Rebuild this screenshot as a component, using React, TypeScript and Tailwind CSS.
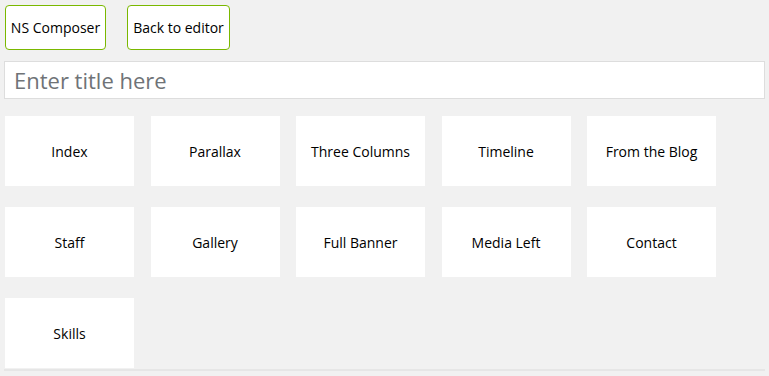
const layouts = [
  "Index",
  "Parallax",
  "Three Columns",
  "Timeline",
  "From the Blog",
  "Staff",
  "Gallery",
  "Full Banner",
  "Media Left",
  "Contact",
  "Skills",
]

export default function App() {
  return (
    <div className="min-h-[376px] w-full bg-[#f1f1f1] font-['Open_Sans',sans-serif] text-[#222]">
      <div className="px-[4px] pt-[5px]">
        {/* top buttons */}
        <div className="flex gap-[21px] pl-[1px]">
          <button className="h-[45px] w-[101px] rounded-[4px] border border-[#7ab800] bg-white text-[14px] text-black">
            NS Composer
          </button>
          <button className="h-[45px] w-[103px] rounded-[4px] border border-[#7ab800] bg-white text-[14px] text-black">
            Back to editor
          </button>
        </div>

        <input
          className="mt-[11px] block h-[38px] w-[761px] border border-[#dddddd] bg-white px-[9px] text-[22px] text-[#333] outline-none placeholder:text-[#6f7377]"
          placeholder="Enter title here"
        />

        {/* layout tiles */}
        <div className="mt-[17px] border-b-2 border-[#e6e6e6] pb-[1px]">
          <div className="grid grid-cols-[repeat(5,129px)] gap-x-[16.5px] gap-y-[21px] pl-[1px]">
            {layouts.map((name) => (
              <div
                key={name}
                className="flex h-[70px] items-center justify-center bg-white text-[14px] text-black"
              >
                {name}
              </div>
            ))}
          </div>
        </div>
      </div>
    </div>
  )
}
